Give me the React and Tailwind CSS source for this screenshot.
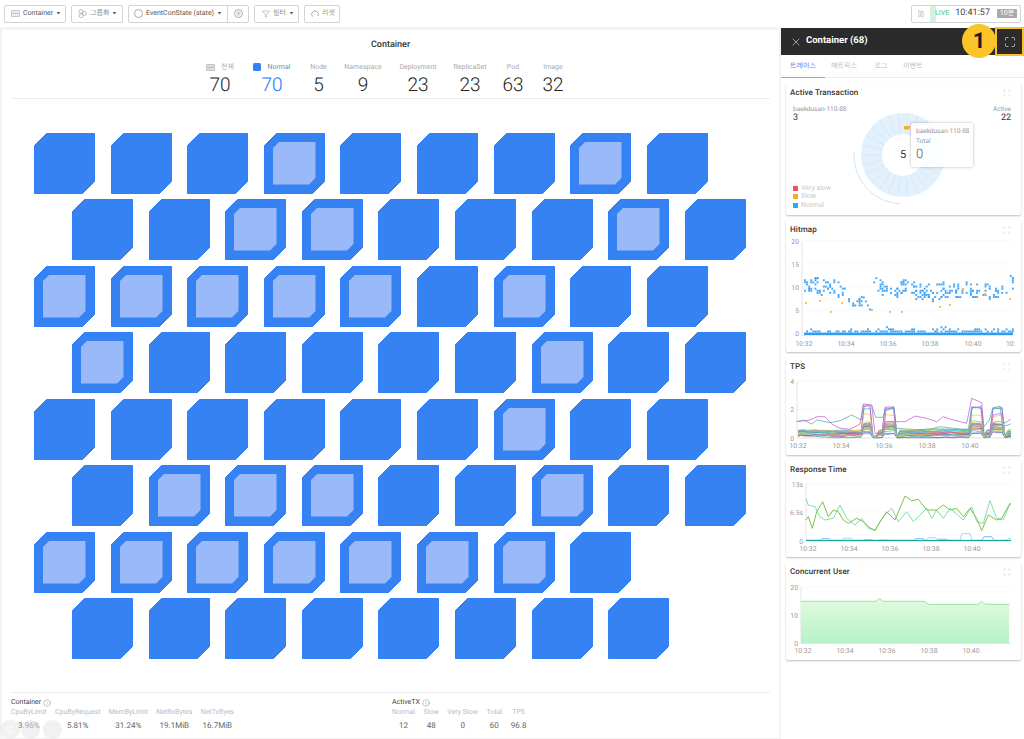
import React from 'react';
import { X, Maximize, Pause, Funnel, Info, Settings, Menu } from 'lucide-react';

// seeded random so the charts stay the same on every load
const makeRandom = (seed) => () => {
  seed = (seed + 0x6d2b79f5) | 0;
  let t = Math.imul(seed ^ (seed >>> 15), 1 | seed);
  t = (t + Math.imul(t ^ (t >>> 7), 61 | t)) ^ t;
  return ((t ^ (t >>> 14)) >>> 0) / 4294967296;
};

const tileRows = [
  { offset: false, count: 9, inner: [3, 7] },
  { offset: true, count: 9, inner: [2, 3, 7] },
  { offset: false, count: 9, inner: [0, 1, 2, 3, 4, 6] },
  { offset: true, count: 9, inner: [0, 6] },
  { offset: false, count: 9, inner: [6] },
  { offset: true, count: 9, inner: [1, 2, 3, 6] },
  { offset: false, count: 8, inner: [0, 1, 2, 3, 4, 5, 6] },
  { offset: true, count: 8, inner: [] },
];

const stats = [
  { label: '전체', value: 70, icon: 'all', width: 'w-[48px]' },
  { label: 'Normal', value: 70, icon: 'normal', width: 'w-[56px]' },
  { label: 'Node', value: 5, width: 'w-[37px]' },
  { label: 'Namespace', value: 9, width: 'w-[52px]' },
  { label: 'Deployment', value: 23, width: 'w-[58px]' },
  { label: 'ReplicaSet', value: 23, width: 'w-[46px]' },
  { label: 'Pod', value: 63, width: 'w-[40px]' },
  { label: 'Image', value: 32, width: 'w-[40px]' },
];

const containerMetrics = [
  { label: 'CpuByLimit', value: '3.96%' },
  { label: 'CpuByRequest', value: '5.81%' },
  { label: 'MemByLimit', value: '31.24%' },
  { label: 'NetRxBytes', value: '19.1MiB' },
  { label: 'NetTxByes', value: '16.7MiB' },
];

const activeMetrics = [
  { label: 'Normal', value: '12' },
  { label: 'Slow', value: '48' },
  { label: 'Very Slow', value: '0' },
  { label: 'Total', value: '60' },
  { label: 'TPS', value: '96.8' },
];

const Caret = () => (
  <svg width="5" height="3" viewBox="0 0 5 3" className="shrink-0">
    <path d="M0.5 0 H4.5 L2.5 2.6 Z" fill="#666" />
  </svg>
);

const ToolButton = ({ children, className = '' }) => (
  <div className={`h-[18px] flex items-center border border-[#d4d4d4] rounded-[2px] bg-white text-[7px] ${className}`}>
    {children}
  </div>
);

const Toolbar = () => (
  <div className="h-[27px] shrink-0 bg-white flex items-center pl-[4px] pr-[3px] gap-[5px]">
    <ToolButton className="w-[62px] pl-[6px] gap-[3px] text-[#555]">
      <svg width="9" height="7" viewBox="0 0 9 7" className="shrink-0">
        <rect x="0.4" y="0.4" width="8.2" height="6.2" rx="0.8" fill="#eee" stroke="#aaa" strokeWidth="0.7" />
        <path d="M1.5 3.5 H7.5" stroke="#aaa" strokeWidth="0.7" />
      </svg>
      <span>Container</span>
      <Caret />
    </ToolButton>
    <ToolButton className="w-[52px] pl-[6px] gap-[3px] text-[#888]">
      <svg width="9" height="9" viewBox="0 0 9 9" className="shrink-0" fill="none" stroke="#999" strokeWidth="0.6">
        <circle cx="3" cy="2.5" r="2" />
        <circle cx="6.5" cy="4.5" r="2" />
        <circle cx="3" cy="6.7" r="2" />
      </svg>
      <span>그룹화</span>
      <Caret />
    </ToolButton>
    <ToolButton className="w-[121px] text-[#555]">
      <div className="flex-1 flex items-center pl-[5px] gap-[3px] h-full">
        <div className="w-[9px] h-[9px] rounded-full border-[0.7px] border-[#aaa] shrink-0" />
        <span>EventConState (state)</span>
        <Caret />
      </div>
      <div className="w-[21px] h-full border-l border-[#d4d4d4] flex items-center justify-center">
        <div className="w-[9px] h-[9px] rounded-full border-[0.7px] border-[#aaa] flex items-center justify-center">
          <Settings size={5} color="#999" strokeWidth={2} />
        </div>
      </div>
    </ToolButton>
    <ToolButton className="w-[45px] pl-[7px] gap-[3px] text-[#888]">
      <Funnel size={8} color="#888" strokeWidth={1.4} />
      <span>필터</span>
      <Caret />
    </ToolButton>
    <ToolButton className="w-[36px] pl-[6px] gap-[3px] text-[#999]">
      <svg width="8" height="8" viewBox="0 0 8 8" fill="none" stroke="#999" strokeWidth="0.8" className="shrink-0">
        <path d="M1.6 6.6 A3.3 3.3 0 1 1 6.8 6" />
      </svg>
      <span>리셋</span>
    </ToolButton>
    <div className="ml-auto w-[110px] h-[18px] flex items-center border border-[#d4d4d4] rounded-[2px] bg-white">
      <div className="w-[18px] h-full flex items-center justify-center">
        <Pause size={8} color="#999" strokeWidth={1.2} />
      </div>
      <div className="w-[6px] h-full bg-[#d6f0dc]" />
      <span className="ml-[-1px] text-[7px] text-[#7bcf97] font-medium">LIVE</span>
      <span className="ml-[6px] text-[9px] text-[#444]">10:41:57</span>
      <span className="ml-[7px] w-[20px] h-[9px] bg-[#aaa] rounded-[1px] text-white text-[7px] leading-[9px] text-center">10분</span>
    </div>
  </div>
);

const Tile = ({ inner }) => (
  <svg width="61" height="61" viewBox="0 0 61 61" className="shrink-0">
    <polygon points="12.5,0.5 60.5,0.5 60.5,48.5 48.5,60.5 0.5,60.5 0.5,12.5" fill="#3782f3" stroke="#2f80f8" strokeWidth="1" />
    {inner && <polygon points="15,9 51.5,9 51.5,45 45,51.5 9,51.5 9,15" fill="#9ab9f8" />}
  </svg>
);

const StatIcon = ({ type }) =>
  type === 'all' ? (
    <svg width="9" height="7" viewBox="0 0 9 7">
      <rect x="0.4" y="0.4" width="8.2" height="6.2" rx="0.8" fill="#ddd" stroke="#aaa" strokeWidth="0.7" />
      <path d="M1.5 3.5 H7.5" stroke="#aaa" strokeWidth="0.7" />
    </svg>
  ) : (
    <div className="w-[8px] h-[8px] rounded-[1.5px] bg-[#3782f3]" />
  );

const Metric = ({ label, value }) => (
  <div className="flex flex-col items-center">
    <span className="text-[7px] text-[#bbb] leading-[9px]">{label}</span>
    <span className="mt-[4px] text-[8px] text-[#666] leading-[10px]">{value}</span>
  </div>
);

const MetricGroup = ({ title, items, className = '', gap }) => (
  <div className={className}>
    <div className="flex items-center gap-[2px] text-[7px] text-[#444] leading-[9px] mb-[1px]">
      <span>{title}</span>
      <Info size={8} color="#777" strokeWidth={1.2} />
    </div>
    <div className={`flex ${gap}`}>
      {items.map((m) => (
        <Metric key={m.label} {...m} />
      ))}
    </div>
  </div>
);

const MainPanel = () => (
  <div className="relative ml-[2px] mt-[3px] w-[777px] h-[708px] bg-white flex flex-col">
    <h1 className="mt-[10px] text-center text-[9px] font-medium text-[#333] leading-[11px]">Container</h1>
    <div className="mt-[11px] flex pl-[194px]">
      {stats.map((s, i) => (
        <div key={s.label} className={`flex flex-col items-center ${s.width}`}>
          <div className="h-[10px] flex items-center gap-[6px] text-[7px] text-[#aaa]">
            {s.icon && <StatIcon type={s.icon} />}
            <span className={i === 1 ? 'text-[#888]' : ''}>{s.label}</span>
          </div>
          <span className={`mt-[2px] text-[19px] font-light leading-[21px] ${i === 1 ? 'text-[#2176f5]' : 'text-[#222]'}`}>
            {s.value}
          </span>
        </div>
      ))}
    </div>
    <div className="mt-[3px] mx-[9px] h-px bg-[#eeeeee]" />
    <div className="mt-[34px] pl-[32px] flex flex-col gap-[5.43px]">
      {tileRows.map((row, r) => (
        <div key={r} className={`flex gap-[15.6px] ${row.offset ? 'pl-[38px]' : ''}`}>
          {Array.from({ length: row.count }, (_, i) => (
            <Tile key={i} inner={row.inner.includes(i)} />
          ))}
        </div>
      ))}
    </div>
    <div className="mt-auto mx-[9px] border-t border-[#eeeeee] pt-[5px] pb-[7px] flex">
      <MetricGroup title="Container" items={containerMetrics} gap="gap-[8.3px]" className="w-[381px]" />
      <MetricGroup title="ActiveTX" items={activeMetrics} gap="gap-[8.6px]" />
    </div>
    <div className="absolute left-[-2px] bottom-[-1px] flex gap-[1px] opacity-50">
      <div className="w-[20px] h-[19px] rounded-full bg-[#e4e4e4] flex items-center justify-center">
        <Menu size={10} color="#fff" />
      </div>
      <div className="w-[19px] h-[19px] rounded-full bg-[#e4e4e4]" />
      <div className="ml-[2px] w-[19px] h-[19px] rounded-full bg-[#e4e4e4]" />
    </div>
  </div>
);

const Card = ({ title, height, children }) => (
  <div className="relative mr-[3px] ml-[5px] bg-white rounded-[2px] shadow-[0_1px_2px_rgba(0,0,0,0.25)] shrink-0" style={{ height }}>
    <div className="h-[17px] pt-[5px] px-[4px] flex items-start justify-between">
      <span className="text-[8px] leading-[10px] font-medium text-[#333] tracking-[0.1px]">{title}</span>
      <Maximize size={8} color="#bbb" strokeWidth={1.2} className="mr-[6px] mt-[1px]" />
    </div>
    {children}
  </div>
);

// charts draw in page coordinates, the viewBox shifts them into the card
const ChartSvg = ({ top, height, children }) => (
  <svg width="235" height={height} viewBox={`786 ${top} 235 ${height}`} className="block" fontSize="6.8" fill="#999">
    {children}
  </svg>
);

const Axis = ({ yLabels, xLabels, left, bottom, right, yText, xText }) => (
  <g>
    {yLabels.map((l) => (
      <g key={l.t}>
        <line x1={left} x2={right} y1={l.y} y2={l.y} stroke="#f4f4f4" strokeWidth="0.6" />
        <text x={yText} y={l.y + 2.5} textAnchor="end">{l.t}</text>
      </g>
    ))}
    <line x1={left} x2={left} y1={yLabels[0].y} y2={bottom} stroke="#ddd" strokeWidth="0.8" />
    <line x1={left} x2={right} y1={bottom} y2={bottom} stroke="#ddd" strokeWidth="0.8" />
    {xLabels.map((l) => (
      <text key={l.t} x={l.x} y={xText} textAnchor="middle">{l.t}</text>
    ))}
  </g>
);

const buildHitmap = () => {
  const rand = makeRandom(17);
  const dots = [];
  let center = 285;
  for (let x = 804; x < 1013; x += 2.1) {
    center += (rand() - 0.5) * 6;
    center = Math.max(281, Math.min(292, center));
    const inDip = x > 846 && x < 862;
    const slope = x >= 862 && x < 870;
    if (slope) {
      dots.push({ x, y: 295 + (x - 862) * 1.9, c: '#42a5f5' });
    } else {
      const n = rand() > 0.15 ? 1 + Math.floor(rand() * 5) : 0;
      for (let i = 0; i < n; i++) {
        const y = inDip ? 297 + rand() * 10 : center + (rand() - 0.5) * 16;
        dots.push({ x, y: Math.round(y / 2.1) * 2.1, c: '#42a5f5' });
      }
    }
    if (rand() > 0.35) dots.push({ x, y: 330.5, c: '#42a5f5' });
    if (rand() > 0.85) dots.push({ x, y: 328.4, c: '#42a5f5' });
    if (rand() > 0.96) dots.push({ x, y: 326.3, c: '#42a5f5' });
  }
  [[805, 302], [819, 300], [830, 311], [841, 302], [871, 309], [889, 311], [901, 311], [939, 306], [949, 304], [962, 288], [984, 293], [1009, 298]].forEach(
    ([x, y]) => dots.push({ x, y, c: '#ffb74d' }),
  );
  return dots;
};
const hitmapDots = buildHitmap();

const Hitmap = () => (
  <ChartSvg top={237} height={115}>
    <Axis
      left={802} right={1012} bottom={335.5} yText={799} xText={345.5}
      yLabels={[{ t: '20', y: 241 }, { t: '15', y: 264 }, { t: '10', y: 287 }, { t: '5', y: 310 }, { t: '0', y: 333 }]}
      xLabels={[{ t: '10:32', x: 804 }, { t: '10:34', x: 846 }, { t: '10:36', x: 888 }, { t: '10:38', x: 930 }, { t: '10:40', x: 973 }]}
    />
    <text x="1006" y="345.5">10:4</text>
    <rect x="1015" y="338" width="6" height="10" fill="#fff" />
    <rect x="804" y="332.6" width="209" height="2.4" fill="#2f9df4" />
    {hitmapDots.map((d, i) => (
      <rect key={i} x={d.x} y={d.y} width="1.9" height="1.9" fill={d.c} />
    ))}
  </ChartSvg>
);

const tpsColors = ['#26c6da', '#ab47bc', '#ffb74d', '#66bb6a', '#42a5f5', '#ec407a', '#8d6e63', '#26a69a', '#5c6bc0', '#9ccc65', '#ffa726', '#29b6f6', '#7e57c2', '#ef5350', '#d4e157', '#00acc1', '#f06292', '#81c784', '#ffd54f', '#ba68c8', '#4fc3f7', '#aed581'];

const bumps = [[862, 872], [884, 894], [971, 981], [991, 1002]];

const buildTps = () => {
  const rand = makeRandom(5);
  return tpsColors.map((color, idx) => {
    const base = 0.05 + rand() * 0.45;
    const height = idx < 3 ? 1.1 + rand() * 0.8 : rand() * 0.8;
    let drift = rand() * 0.1;
    const pts = [];
    for (let x = 798; x <= 1011; x += 3) {
      drift += (rand() - 0.5) * 0.1;
      drift = Math.max(-0.12, Math.min(0.25, drift));
      let v = base + drift;
      const inBump = bumps.some(([a, b]) => x >= a && x <= b);
      const afterBump = bumps.some(([, b]) => x > b && x < b + 6);
      if (inBump) v += height;
      if (afterBump) v *= 0.25;
      v = Math.max(0.02, v);
      pts.push(`${x},${(438 - v * 14.3).toFixed(1)}`);
    }
    return { color, pts: pts.join(' ') };
  });
};
const tpsLines = buildTps();

const zoomPts = (list, oy) => list.map(([x, y]) => `${(780 + x / 3).toFixed(1)},${(oy + y / 3).toFixed(1)}`).join(' ');

const tpsTeal = zoomPts([[50, 605], [70, 600], [95, 612], [110, 600], [150, 608], [180, 602], [215, 585], [243, 600], [250, 555], [275, 556], [287, 592], [308, 592], [315, 572], [342, 565], [348, 625], [390, 628], [440, 630], [480, 620], [520, 625], [565, 630], [575, 560], [605, 565], [612, 620], [628, 600], [638, 565], [660, 558], [668, 620], [692, 612]], 220);
const tpsPurple = zoomPts([[50, 605], [90, 600], [110, 590], [135, 590], [155, 612], [180, 625], [210, 628], [240, 612], [250, 552], [275, 555], [285, 640], [310, 640], [318, 568], [340, 562], [345, 605], [375, 605], [405, 588], [440, 595], [470, 605], [490, 590], [520, 600], [560, 610], [575, 535], [605, 548], [612, 640], [630, 640], [640, 585], [665, 580], [672, 610], [692, 598]], 220);

const Tps = () => (
  <ChartSvg top={374} height={81}>
    <Axis
      left={797} right={1011} bottom={438} yText={794} xText={448}
      yLabels={[{ t: '4', y: 381 }, { t: '2', y: 409.5 }, { t: '0', y: 438 }]}
      xLabels={[{ t: '10:32', x: 798 }, { t: '10:34', x: 841 }, { t: '10:36', x: 884 }, { t: '10:38', x: 927 }, { t: '10:40', x: 970 }]}
    />
    {tpsLines.map((l) => (
      <polyline key={l.color} points={l.pts} fill="none" stroke={l.color} strokeWidth="0.7" />
    ))}
    <polyline points={tpsTeal} fill="none" stroke="#4db6ac" strokeWidth="0.8" />
    <polyline points={tpsPurple} fill="none" stroke="#ce63d8" strokeWidth="0.8" />
  </ChartSvg>
);

const rtDark = zoomPts([[78, 180], [85, 170], [97, 205], [110, 155], [128, 125], [145, 170], [160, 150], [175, 155], [190, 180], [205, 190], [230, 175], [250, 185], [265, 200], [285, 212], [300, 185], [320, 155], [345, 180], [375, 108], [395, 122], [415, 118], [440, 150], [470, 150], [490, 135], [510, 150], [530, 145], [550, 170], [570, 145], [590, 175], [605, 212], [625, 165], [650, 180], [665, 175], [690, 130]], 460);
const rtLight = zoomPts([[78, 115], [85, 135], [105, 140], [120, 170], [135, 180], [160, 175], [180, 135], [200, 175], [225, 195], [245, 175], [265, 205], [285, 210], [310, 170], [335, 145], [355, 185], [380, 155], [400, 185], [440, 145], [455, 175], [470, 150], [490, 175], [510, 145], [550, 180], [575, 140], [590, 185], [610, 190], [630, 122], [650, 175], [670, 180], [690, 130], [692, 135]], 460);
const rtBlue = zoomPts([[78, 241], [120, 241], [125, 236], [148, 236], [153, 241], [250, 241], [255, 239], [275, 239], [280, 241], [402, 241], [408, 236], [430, 236], [436, 241], [470, 241], [478, 238], [500, 238], [505, 241], [605, 241], [612, 230], [635, 230], [642, 241], [692, 241]], 460);
const rtTeal = zoomPts([[78, 241], [185, 241], [190, 235], [215, 235], [220, 241], [295, 241], [300, 239], [325, 239], [330, 241], [438, 241], [445, 233], [468, 233], [475, 241], [540, 241], [545, 221], [570, 221], [576, 241], [680, 241], [684, 236], [692, 236]], 460);

const ResponseTime = () => (
  <ChartSvg top={477} height={80}>
    <Axis
      left={806} right={1011} bottom={541} yText={803} xText={550.5}
      yLabels={[{ t: '13s', y: 484 }, { t: '6.5s', y: 512 }, { t: '0', y: 541 }]}
      xLabels={[{ t: '10:32', x: 808 }, { t: '10:34', x: 849 }, { t: '10:36', x: 890 }, { t: '10:38', x: 931 }, { t: '10:40', x: 972 }]}
    />
    <polyline points={rtLight} fill="none" stroke="#7fe0a6" strokeWidth="1" />
    <polyline points={rtDark} fill="none" stroke="#7cc24a" strokeWidth="1" />
    <polyline points={rtBlue} fill="none" stroke="#64a5f5" strokeWidth="0.8" />
    <polyline points={rtTeal} fill="none" stroke="#80d8c8" strokeWidth="0.8" />
    <line x1="806" x2="1011" y1="540.5" y2="540.5" stroke="#16a6a0" strokeWidth="1" />
  </ChartSvg>
);

const userTop = zoomPts([[62, 424], [288, 424], [298, 415], [310, 424], [435, 424], [445, 433], [595, 433], [604, 424], [616, 433], [688, 433]], 460);
const userArea = `801,643 ${userTop} 1009,643`;

const ConcurrentUser = () => (
  <ChartSvg top={579} height={81}>
    <defs>
      <linearGradient id="userFill" x1="0" y1="0" x2="0" y2="1">
        <stop offset="0" stopColor="#e2fbdc" />
        <stop offset="1" stopColor="#b7f2c9" />
      </linearGradient>
    </defs>
    <Axis
      left={801} right={1011} bottom={643.5} yText={798} xText={652.5}
      yLabels={[{ t: '20', y: 587 }, { t: '10', y: 615 }, { t: '0', y: 643 }]}
      xLabels={[{ t: '10:32', x: 803 }, { t: '10:34', x: 845 }, { t: '10:36', x: 887 }, { t: '10:38', x: 929 }, { t: '10:40', x: 971 }]}
    />
    <polygon points={userArea} fill="url(#userFill)" />
    <polyline points={userTop} fill="none" stroke="#8fe0a8" strokeWidth="0.9" />
  </ChartSvg>
);

const spokes = Array.from({ length: 26 }, (_, i) => (i * Math.PI * 2) / 26);

const Donut = () => (
  <svg width="110" height="110" viewBox="0 0 110 110" className="absolute left-[62px] top-[17px]">
    <circle cx="55" cy="55" r="31.5" fill="none" stroke="#e3f1fc" strokeWidth="21" />
    {spokes.map((a, i) => (
      <line
        key={i}
        x1={55 + Math.cos(a) * 21}
        y1={55 + Math.sin(a) * 21}
        x2={55 + Math.cos(a) * 42}
        y2={55 + Math.sin(a) * 42}
        stroke="#c5dff5"
        strokeWidth="0.5"
      />
    ))}
    <path d="M6 52 A49 49 0 0 0 52 104" fill="none" stroke="#cfe5fb" strokeWidth="1" />
    <path d="M56 26 H62 L61 29.5 H56 Z" fill="#ffa726" />
    <path d="M63 23 L70 26 L66 31 L62 29 Z" fill="#f8d7d3" />
  </svg>
);

const ActiveTransaction = () => (
  <div className="px-[7px] pt-[5px] h-[115px] flex flex-col">
    <div className="flex justify-between text-[6.5px] text-[#999] leading-[8px]">
      <div>
        <div>baekdusan-110-88</div>
        <div className="text-[9px] text-[#333] leading-[11px]">3</div>
      </div>
      <div className="text-right pr-[3px]">
        <div>Active</div>
        <div className="text-[9px] text-[#333] leading-[11px]">22</div>
      </div>
    </div>
    <Donut />
    <div className="absolute left-[114px] top-[66px] text-[11px] text-[#333] leading-[12px]">5</div>
    <div className="absolute left-[125px] top-[40px] w-[62px] h-[44px] bg-white/90 rounded-[2px] shadow-[0_0_3px_rgba(0,0,0,0.3)] px-[5px] py-[4px] text-[6.5px] text-[#999] leading-[9px] whitespace-nowrap">
      <div>baekdusan-110-88</div>
      <div className="mt-[1px]">Total</div>
      <div className="mt-[1px] text-[13px] font-light text-[#555] leading-[15px]">0</div>
    </div>
    <div className="mt-auto mb-[6px] flex flex-col gap-[1px] text-[7px] text-[#c8c8c8] leading-[7.5px]">
      {[['Very slow', 'bg-[#ef5350]'], ['Slow', 'bg-[#ffa726]'], ['Normal', 'bg-[#29a8f5]']].map(([t, c]) => (
        <div key={t} className="flex items-center gap-[3px]">
          <div className={`w-[5px] h-[5px] ${c}`} />
          <span>{t}</span>
        </div>
      ))}
    </div>
  </div>
);

const SidePanel = () => (
  <div className="relative ml-[2px] w-[243px] h-full bg-white flex flex-col">
    <div className="h-[27px] mt-[1px] shrink-0 bg-[#2b2b2b] flex items-center pl-[9px]">
      <X size={12} color="#ddd" strokeWidth={1.3} />
      <span className="ml-[4px] text-[9.5px] font-bold text-white">Container (68)</span>
    </div>
    <div className="h-[23px] shrink-0 flex border-b border-[#eeeeee] text-[7px] text-[#bbb]">
      <div className="w-[44px] h-[23px] flex items-center justify-center text-[#5c7cf0] border-b-[1.5px] border-[#8fa6f5]">트레이스</div>
      <div className="ml-[1px] w-[36px] flex items-center justify-center">매트릭스</div>
      <div className="ml-[9px] w-[20px] flex items-center justify-center">로그</div>
      <div className="ml-[7px] w-[30px] flex items-center justify-center">이벤트</div>
    </div>
    <div className="pt-[5px] flex flex-col gap-[5px]">
      <Card title="Active Transaction" height={132}><ActiveTransaction /></Card>
      <Card title="Hitmap" height={132}><Hitmap /></Card>
      <Card title="TPS" height={98}><Tps /></Card>
      <Card title="Response Time" height={97}><ResponseTime /></Card>
      <Card title="Concurrent User" height={98}><ConcurrentUser /></Card>
    </div>
    {/* help marker over the header */}
    <div className="absolute right-0 top-0 w-[29px] h-[29px] border-[2px] border-[#fbc02d] bg-[#2b2b2b] flex items-center justify-center">
      <Maximize size={12} color="#eee" strokeWidth={1.3} />
    </div>
    <div className="absolute right-[28px] top-[-3px] w-[34px] h-[34px] rounded-full bg-[#fbc427] flex items-center justify-center text-[22px] font-bold text-[#1a1a1a]">
      1
    </div>
  </div>
);

export default function App() {
  return (
    <div className="w-[1024px] h-[739px] overflow-hidden bg-[#f3f3f3] flex flex-col [text-rendering:geometricPrecision] [font-family:Roboto,'Noto_Sans_CJK_KR',sans-serif]">
      <Toolbar />
      <div className="flex flex-1 min-h-0">
        <MainPanel />
        <SidePanel />
      </div>
    </div>
  );
}
